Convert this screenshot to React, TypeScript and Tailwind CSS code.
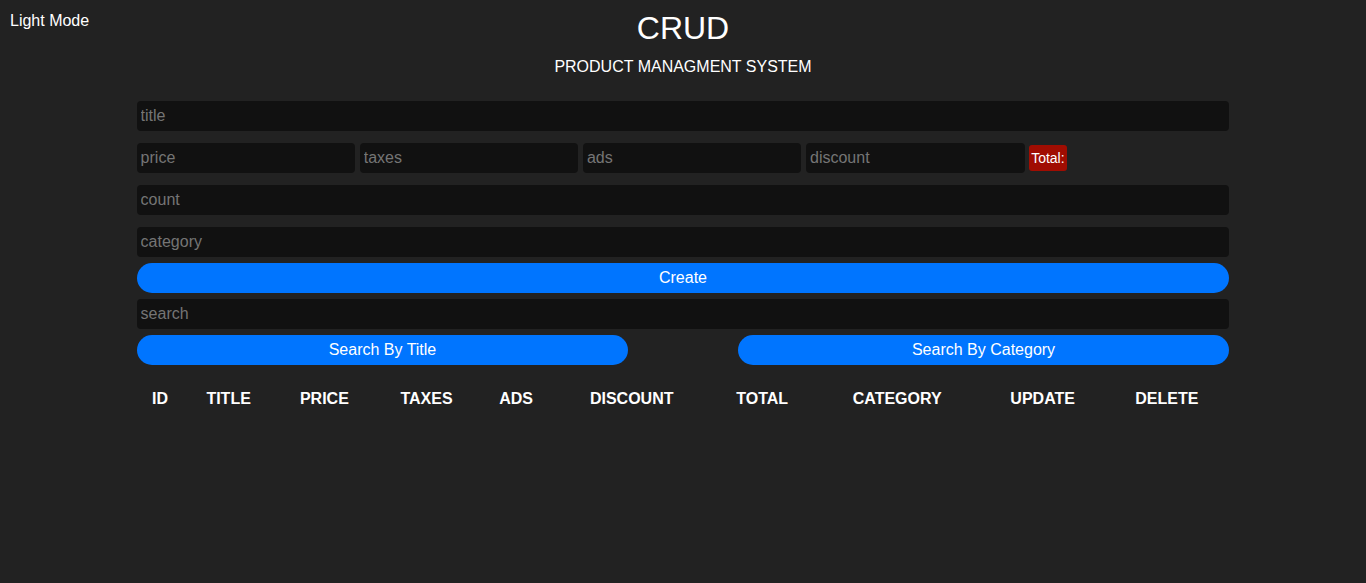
import React from "react";

const inputCls =
  "block w-full h-[30px] rounded-[4px] bg-[#111111] px-1 text-[16px] text-white placeholder:text-[#757575] outline-none";

const columns = [
  "ID",
  "TITLE",
  "PRICE",
  "TAXES",
  "ADS",
  "DISCOUNT",
  "TOTAL",
  "CATEGORY",
  "UPDATE",
  "DELETE",
];

export default function App() {
  return (
    <div
      className="relative min-h-[583px] bg-[#222222] text-white"
      style={{ fontFamily: '"Liberation Sans", Arial, sans-serif' }}
    >
      <button className="absolute left-[10px] top-[12px] text-[16px] leading-[18px] text-white">
        Light Mode
      </button>

      <div className="mx-auto w-[80%]">
        <div className="pt-[10px] text-center">
          <h2 className="text-[32px] leading-[37px]">CRUD</h2>
          <p className="mt-[11px] text-[16px] leading-[18px]">PRODUCT MANAGMENT SYSTEM</p>
        </div>

        <div className="mt-[25px] flex flex-col">
          <input className={inputCls} placeholder="title" />

          <div className="mt-[12px] flex items-center gap-[4.6px]">
            <input className={inputCls + " !w-[20%]"} placeholder="price" />
            <input className={inputCls + " !w-[20%]"} placeholder="taxes" />
            <input className={inputCls + " !w-[20%]"} placeholder="ads" />
            <input className={inputCls + " !w-[20%]"} placeholder="discount" />
            <small className="flex h-[26px] items-center rounded-[3px] bg-[#a00d02] px-[2px] text-[14px] text-white">
              Total:
            </small>
          </div>

          <input className={inputCls + " mt-[12px]"} placeholder="count" />
          <input className={inputCls + " mt-[12px]"} placeholder="category" />

          <button className="mt-[6px] h-[30px] w-full rounded-full bg-[#0075ff] text-[16px] text-white">
            Create
          </button>

          <input className={inputCls + " mt-[6px]"} placeholder="search" />

          <div className="mt-[6px] flex justify-between">
            <button className="h-[30px] w-[45%] rounded-full bg-[#0075ff] text-[16px] text-white">
              Search By Title
            </button>
            <button className="h-[30px] w-[45%] rounded-full bg-[#0075ff] text-[16px] text-white">
              Search By Category
            </button>
          </div>
        </div>

        <table className="mt-[18px] w-full border-separate border-spacing-[2px]">
          <thead>
            <tr>
              {columns.map((c) => (
                <th key={c} className="p-[5px] text-center text-[16px] font-bold leading-[18px]">
                  {c}
                </th>
              ))}
            </tr>
          </thead>
          <tbody></tbody>
        </table>
      </div>
    </div>
  );
}
